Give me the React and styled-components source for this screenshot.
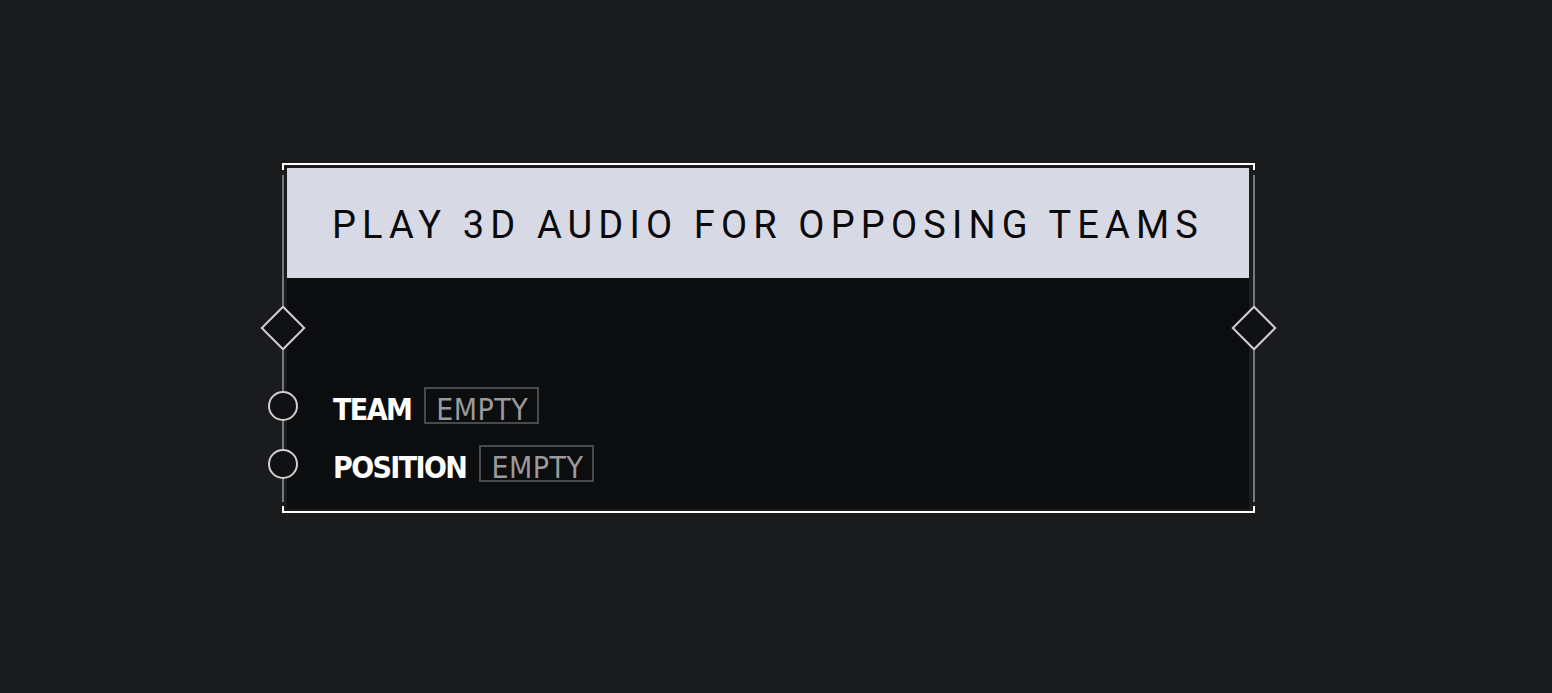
import React from "react";
import styled, { createGlobalStyle } from "styled-components";

const GlobalStyle = createGlobalStyle`
  html, body {
    margin: 0;
    padding: 0;
    background: #1a1b1d;
  }
  body {
    font-family: "Roboto", "DejaVu Sans", sans-serif;
  }
`;

const Page = styled.div`
  width: 1552px;
  height: 693px;
  padding: 163px 0 0 282px;
  box-sizing: border-box;
`;

const Frame = styled.div`
  position: relative;
  width: 973px;
  height: 350px;
  box-sizing: border-box;
  padding: 5px 6px 4px 5px;

  &::before,
  &::after {
    content: "";
    position: absolute;
    left: 0;
    right: 0;
    height: 5px;
    border-left: 2px solid #fff;
    border-right: 2px solid #fff;
  }
  &::before {
    top: 0;
    border-top: 2px solid #fff;
  }
  &::after {
    bottom: 0;
    border-bottom: 2px solid #fff;
  }
`;

const Rail = styled.div`
  position: absolute;
  top: 12px;
  bottom: 11px;
  width: 2px;
  background: #77787a;
  ${p => (p.$side === "right" ? "right: 0;" : "left: 0;")}
`;

const Card = styled.div`
  position: relative;
  height: 100%;
  display: flex;
  flex-direction: column;
  background: #0c0d0f;
`;

const Header = styled.div`
  height: 110px;
  flex-shrink: 0;
  display: flex;
  align-items: center;
  justify-content: center;
  background: #d7d9e4;
  color: #0a0a0c;
  font-family: "Roboto", "DejaVu Sans", sans-serif;
  font-size: 38px;
  letter-spacing: 6.15px;
  padding-top: 3px;
  box-sizing: border-box;
`;

const ExecRow = styled.div`
  height: 100px;
  display: flex;
  align-items: center;
  justify-content: space-between;
  margin: 0 -21px 0 -20px;
`;

const Diamond = styled.div`
  width: 32px;
  height: 32px;
  box-sizing: border-box;
  border: 2px solid #cfcfd1;
  background: #101113;
  transform: rotate(45deg);
`;

const Pins = styled.div`
  display: flex;
  flex-direction: column;
  gap: 21px;
  margin-top: 9px;
`;

const PinRow = styled.div`
  height: 37px;
  display: flex;
  align-items: center;
  margin-left: -19px;
`;

const Circle = styled.div`
  width: 30px;
  height: 30px;
  box-sizing: border-box;
  border-radius: 50%;
  border: 2px solid #cfcfd1;
  background: #101113;
  margin-right: 35px;
`;

const Label = styled.span`
  font-family: "DejaVu Sans Condensed", "Liberation Sans Narrow", "Roboto", sans-serif;
  font-weight: 700;
  font-size: 30px;
  color: #fff;
  margin-right: 13px;
  padding-top: 8px;
  letter-spacing: -1.6px;
`;

const Value = styled.span`
  height: 37px;
  box-sizing: border-box;
  display: flex;
  align-items: center;
  padding: 7px 9px 0 10px;
  border: 2px solid #48494b;
  font-family: "DejaVu Sans Condensed", "Liberation Sans Narrow", "Roboto", sans-serif;
  font-weight: 400;
  font-size: 30px;
  color: #9a9a9c;
  letter-spacing: 0.5px;
`;

const pins = [
  { name: "TEAM", value: "EMPTY" },
  { name: "POSITION", value: "EMPTY" },
];

export default function App() {
  return (
    <Page>
      <GlobalStyle />
      <Frame>
        <Rail $side="left" />
        <Rail $side="right" />
        <Card>
          <Header>PLAY 3D AUDIO FOR OPPOSING TEAMS</Header>
          <ExecRow>
            <Diamond />
            <Diamond />
          </ExecRow>
          <Pins>
            {pins.map(pin => (
              <PinRow key={pin.name}>
                <Circle />
                <Label>{pin.name}</Label>
                <Value>{pin.value}</Value>
              </PinRow>
            ))}
          </Pins>
        </Card>
      </Frame>
    </Page>
  );
}
